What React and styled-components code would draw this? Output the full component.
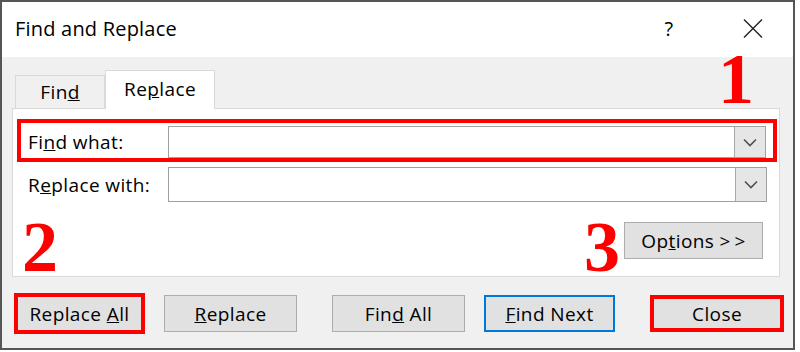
import React from "react";
import styled, { createGlobalStyle } from "styled-components";

const GlobalStyle = createGlobalStyle`
  html, body {
    margin: 0;
    padding: 0;
    background: #ffffff;
  }
  body {
    font-family: "Open Sans", "Noto Sans", sans-serif;
    color: #000;
    letter-spacing: 0.4px;
  }
`;

const RED = "#ff0000";

const Dialog = styled.div`
  position: relative;
  width: 795px;
  height: 350px;
  box-sizing: border-box;
  border: 2px solid #555555;
  background: #f0f0f0;
  display: flex;
  flex-direction: column;
`;

const TitleBar = styled.div`
  height: 55px;
  flex: none;
  background: #ffffff;
  display: flex;
  align-items: center;
  padding-left: 13px;
`;

const Title = styled.div`
  font-size: 20px;
  letter-spacing: 0.2px;
  flex: 1;
  margin-top: -3px;
`;

const TitleButton = styled.div`
  width: ${(p) => p.$w}px;
  margin-right: ${(p) => p.$gap}px;
  display: flex;
  justify-content: center;
  align-items: center;
  font-size: 20px;
  margin-top: -2px;
`;

const Body = styled.div`
  padding: 13px 0 0 10px;
  display: flex;
  flex-direction: column;
`;

const TabRow = styled.div`
  display: flex;
  align-items: flex-end;
  height: 38px;
  padding-left: 3px;
  position: relative;
  z-index: 1;
`;

const Tab = styled.div`
  box-sizing: border-box;
  width: ${(p) => p.$w}px;
  height: ${(p) => (p.$active ? 39 : 33)}px;
  margin-bottom: ${(p) => (p.$active ? -1 : 0)}px;
  border: 1px solid #d9d9d9;
  border-bottom: none;
  background: ${(p) => (p.$active ? "#ffffff" : "#f0f0f0")};
  display: flex;
  justify-content: center;
  align-items: center;
  font-size: 19px;
  padding-bottom: ${(p) => (p.$active ? 2 : 0)}px;
`;

const Panel = styled.div`
  box-sizing: border-box;
  width: 768px;
  height: 169px;
  background: #ffffff;
  border: 1px solid #d9d9d9;
  padding: 10px 2px 0 4px;
  display: flex;
  flex-direction: column;
`;

const FieldRow = styled.div`
  display: flex;
  align-items: center;
  box-sizing: border-box;
  ${(p) =>
    p.$marked
      ? `
    border: 4px solid ${RED};
    height: 43px;
    padding: 3px 7px 0 7px;
    align-items: flex-start;
  `
      : `
    margin-top: 5px;
    padding-left: 11px;
  `}
`;

const Label = styled.div`
  width: 140px;
  flex: none;
  font-size: 19px;
  ${(p) => p.$marked && "line-height: 33px;"}
`;

const Combo = styled.div`
  box-sizing: border-box;
  width: ${(p) => p.$w}px;
  height: ${(p) => p.$h}px;
  border: 1px solid #a0a0a0;
  background: #ffffff;
  display: flex;
  justify-content: flex-end;
`;

const DropButton = styled.div`
  box-sizing: border-box;
  width: 31px;
  height: 100%;
  border-left: 1px solid #a8a8a8;
  background: #e6e6e6;
  display: flex;
  justify-content: center;
  align-items: center;
`;

const OptionsRow = styled.div`
  display: flex;
  align-items: flex-start;
  margin-top: 20px;
  padding: 0 14px 0 5px;
`;

const Marker = styled.div`
  font-family: "Liberation Serif", "Times New Roman", serif;
  font-weight: bold;
  font-size: 72px;
  letter-spacing: 0;
  line-height: 48px;
  height: 50px;
  color: ${RED};
  margin-top: 1px;
`;

const FloatingMarker = styled(Marker)`
  position: absolute;
  left: 716px;
  top: 53px;
  margin: 0;
  z-index: 2;
`;

const Spacer = styled.div`
  flex: 1;
`;

const Button = styled.div`
  box-sizing: border-box;
  width: ${(p) => p.$w || 133}px;
  height: ${(p) => p.$h || 37}px;
  margin-left: ${(p) => p.$ml || 0}px;
  background: #e1e1e1;
  border: ${(p) =>
    p.$ring === "red"
      ? `4px solid ${RED}`
      : p.$ring === "blue"
      ? "2px solid #0078d7"
      : "1px solid #adadad"};
  display: flex;
  justify-content: center;
  align-items: center;
  font-size: 19px;
  flex: none;
`;

const ButtonRow = styled.div`
  display: flex;
  align-items: center;
  margin-top: 16px;
  height: 41px;
  padding-left: 2px;
`;

const Group = styled.div`
  display: flex;
  align-items: center;
  gap: 19px;
  margin-right: 35px;
`;

const Chevron = () => (
  <svg width="14" height="9" viewBox="0 0 14 9">
    <path d="M1 1.5 L7 7.5 L13 1.5" fill="none" stroke="#505050" strokeWidth="1.6" />
  </svg>
);

const CloseIcon = () => (
  <svg width="20" height="19" viewBox="0 0 20 19">
    <path d="M1 0.5 L19 18.5 M19 0.5 L1 18.5" stroke="#222" strokeWidth="1.4" />
  </svg>
);

function App() {
  return (
    <>
      <GlobalStyle />
      <Dialog>
        <TitleBar>
          <Title>Find and Replace</Title>
          <TitleButton $w={24} $gap={62}>
            ?
          </TitleButton>
          <TitleButton $w={20} $gap={30}>
            <CloseIcon />
          </TitleButton>
        </TitleBar>
        <FloatingMarker>1</FloatingMarker>
        <Body>
          <TabRow>
            <Tab $w={90}>
              <span>
                Fin<u>d</u>
              </span>
            </Tab>
            <Tab $w={110} $active>
              <span>
                Re<u>p</u>lace
              </span>
            </Tab>
          </TabRow>
          <Panel>
            <FieldRow $marked>
              <Label $marked>
                Fi<u>n</u>d what:
              </Label>
              <Combo $w={598} $h={32}>
                <DropButton>
                  <Chevron />
                </DropButton>
              </Combo>
            </FieldRow>
            <FieldRow>
              <Label>
                R<u>e</u>place with:
              </Label>
              <Combo $w={599} $h={35}>
                <DropButton>
                  <Chevron />
                </DropButton>
              </Combo>
            </FieldRow>
            <OptionsRow>
              <Marker>2</Marker>
              <Spacer />
              <Marker>3</Marker>
              <Button $w={139} $ml={4}>
                <span>
                  Op<u>t</u>ions &gt;{"\u2009"}&gt;
                </span>
              </Button>
            </OptionsRow>
          </Panel>
          <ButtonRow>
            <Group>
              <Button $w={131} $h={41} $ring="red">
                <span>
                  Replace <u>A</u>ll
                </span>
              </Button>
              <Button>
                <span>
                  <u>R</u>eplace
                </span>
              </Button>
            </Group>
            <Group>
              <Button>
                <span>
                  Fin<u>d</u> All
                </span>
              </Button>
              <Button $w={131} $ring="blue">
                <span>
                  <u>F</u>ind Next
                </span>
              </Button>
            </Group>
            <Button $w={134} $ring="red">
              Close
            </Button>
          </ButtonRow>
        </Body>
      </Dialog>
    </>
  );
}

export default App;
